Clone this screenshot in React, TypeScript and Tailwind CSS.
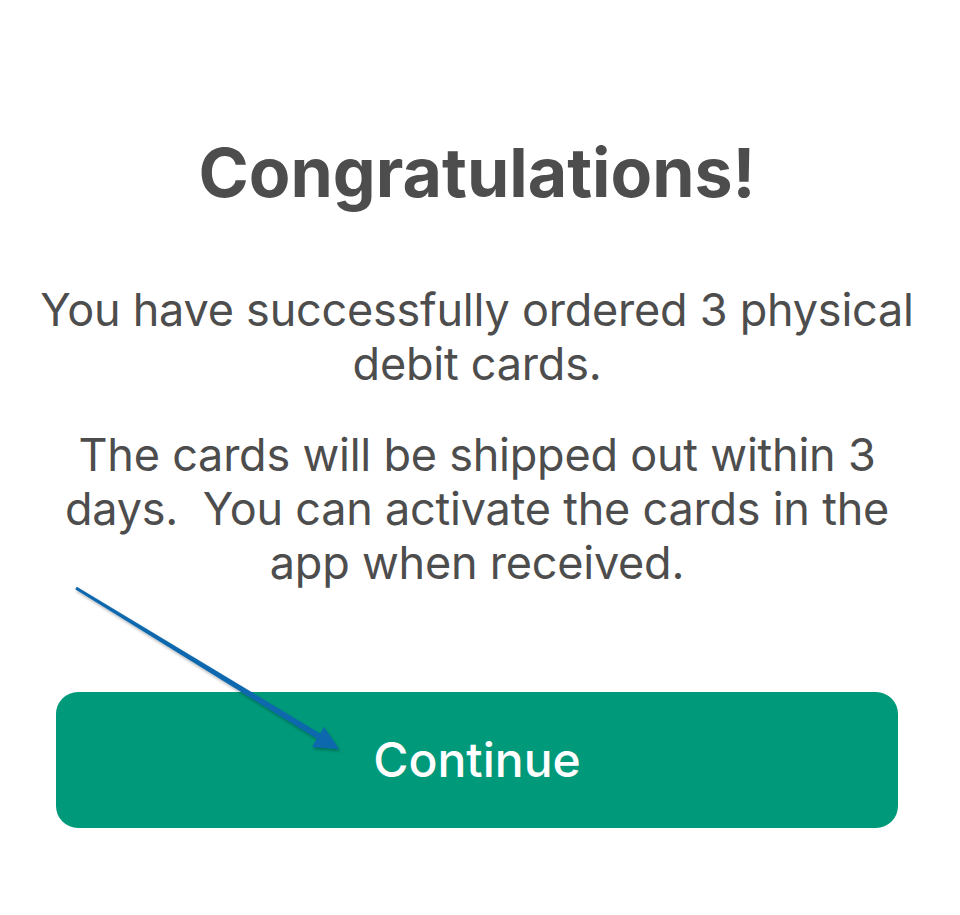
import React from "react";

function Arrow() {
    return (
        <svg className="absolute left-0 top-0 pointer-events-none" width="960" height="915" viewBox="0 0 960 915">
            <defs>
                <filter id="sh" x="-10%" y="-10%" width="120%" height="130%">
                    <feDropShadow dx="1" dy="2" stdDeviation="1.5" floodColor="#000" floodOpacity="0.3" />
                </filter>
            </defs>
            <g filter="url(#sh)" fill="#0a67ad">
                <polygon points="76.8,586.7 321.6,734.4 318.4,739.6 75.2,589.3" />
                <polygon points="339,749 312,747 324,727" />
            </g>
        </svg>
    );
}

export default function App() {
    return (
        <div className="relative w-[960px] h-[915px] bg-white overflow-hidden" style={{ fontFamily: "Inter, 'Liberation Sans', sans-serif" }}>
            <div className="flex flex-col items-center pl-[56px] pr-[62px] pt-[138px] text-center text-[#4d4d4d]">
                <h1 className="text-[68px] leading-[68px] font-bold">Congratulations!</h1>
                <div className="mt-[77px] text-[45px] leading-[54px] tracking-[-0.005em] whitespace-nowrap">
                    <p>You have successfully ordered 3 physical<br />debit cards.</p>
                    <p className="mt-[37px]">
                        The cards will be shipped out within 3<br />days.&nbsp; You can activate the cards in the<br />app when received.
                    </p>
                </div>
                <button className="mt-[102px] w-full h-[136px] rounded-[22px] bg-[#00997a] text-white text-[48px] font-medium">
                    Continue
                </button>
            </div>
            <Arrow />
        </div>
    );
}
